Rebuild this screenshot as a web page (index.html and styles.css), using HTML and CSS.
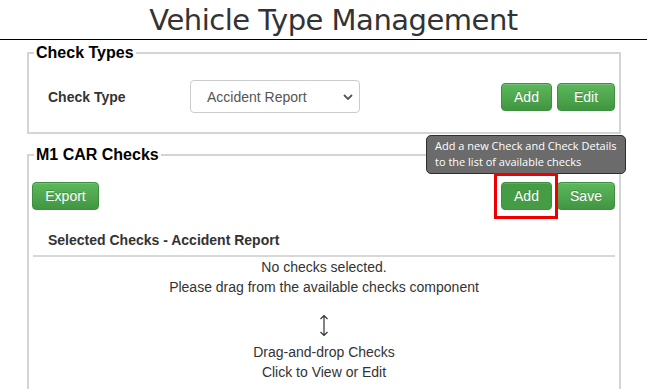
FILE: index.html
```html
<!DOCTYPE html>
<html>
<head>
<meta charset="utf-8">
<link rel="stylesheet" href="styles.css">
</head>
<body>
<h1 class="page-title">Vehicle Type Management</h1>

<fieldset class="panel">
  <legend class="panel-legend">Check Types</legend>
  <div class="type-row">
    <label class="type-label">Check Type</label>
    <select class="type-select">
      <option>Accident Report</option>
    </select>
    <div class="btn-group">
      <button class="btn">Add</button>
      <button class="btn btn-wide">Edit</button>
    </div>
  </div>
</fieldset>

<fieldset class="panel panel-checks">
  <legend class="panel-legend">M1 CAR Checks</legend>
  <div class="toolbar">
    <button class="btn btn-export">Export</button>
    <div class="btn-group">
      <button class="btn btn-active">Add</button>
      <button class="btn btn-wide">Save</button>
    </div>
  </div>
  <div class="tooltip">Add a new Check and Check Details<br>to the list of available checks</div>
  <div class="highlight"></div>
  <div class="section-head">Selected Checks - Accident Report</div>
  <div class="empty">
    <p class="empty-line">No checks selected.</p>
    <p class="empty-line">Please drag from the available checks component</p>
    <svg class="updown" width="12" height="23" viewBox="0 0 12 23">
      <path d="M6 1.5 V21.5 M2.5 5 L6 1.5 L9.5 5 M2.5 18 L6 21.5 L9.5 18" fill="none" stroke="#333" stroke-width="1.2"/>
    </svg>
    <p class="empty-line">Drag-and-drop Checks</p>
    <p class="empty-line">Click to View or Edit</p>
  </div>
</fieldset>
</body>
</html>
```

FILE: styles.css
```css
html, body {
  margin: 0;
  padding: 0;
  background: #fff;
  font-family: "Liberation Sans", Arial, sans-serif;
  color: #333;
}

.page-title {
  margin: 0;
  padding: 2px 0 0 20px;
  height: 37px;
  line-height: 36px;
  font-family: "DejaVu Sans", Verdana, sans-serif;
  font-weight: normal;
  font-size: 29px;
  letter-spacing: -0.5px;
  text-align: center;
  color: #333;
  border-bottom: 1px solid #000;
}

.panel {
  margin: 4px 26px 0 27px;
  padding: 0 3px;
  border: 2px solid #d4d4d4;
  min-width: 0;
}

.panel-checks {
  position: relative;
  margin-top: 12px;
  border-bottom: none;
}

.panel-legend {
  margin-left: 2px;
  padding: 0 2px;
  font-weight: bold;
  font-size: 16px;
  line-height: 18px;
  color: #000;
}

.type-row {
  display: flex;
  align-items: center;
  margin: 18px 1px 19px 0;
}

.type-label {
  width: 142px;
  padding-left: 16px;
  font-weight: bold;
  font-size: 14px;
}

.type-select {
  -webkit-appearance: none;
  appearance: none;
  width: 170px;
  height: 33px;
  padding: 0 0 0 16px;
  border: 1px solid #ccc;
  border-radius: 4px;
  background: #fff url("data:image/svg+xml,%3Csvg xmlns='http://www.w3.org/2000/svg' width='10' height='6' viewBox='0 0 10 6'%3E%3Cpath d='M1 1 L5 5 L9 1' fill='none' stroke='%23555' stroke-width='1.8'/%3E%3C/svg%3E") no-repeat right 6px center;
  font-family: "Liberation Sans", Arial, sans-serif;
  font-size: 14px;
  color: #555;
}

.btn-group {
  display: flex;
  gap: 5px;
  margin-left: auto;
}

.btn {
  height: 28px;
  width: 51px;
  padding: 0;
  border: 1px solid #3e8f3e;
  border-radius: 4px;
  background: linear-gradient(to bottom, #5cb85c 0%, #419641 100%);
  color: #fff;
  font-family: "Liberation Sans", Arial, sans-serif;
  font-size: 14px;
  text-shadow: 0 -1px 0 rgba(0, 0, 0, 0.2);
  box-shadow: inset 0 1px 0 rgba(255, 255, 255, 0.15);
}

.btn-wide { width: 58px; }
.btn-export { width: 67px; }

.btn-active {
  background: #449d44;
  border-color: #3e8f3e;
}

.toolbar {
  display: flex;
  align-items: center;
  margin: 18px 1px 0 0;
}

.tooltip {
  position: absolute;
  left: 397px;
  top: -29px;
  width: 182px;
  padding: 2px 8px 3px 8px;
  background: #6b6b6b;
  border: 1px solid #2e2e2e;
  border-radius: 5px;
  color: #fff;
  font-family: "Open Sans", "DejaVu Sans", sans-serif;
  font-size: 11px;
  line-height: 16px;
  white-space: nowrap;
}

.highlight {
  position: absolute;
  left: 465px;
  top: 9px;
  width: 58px;
  height: 40px;
  border: 3px solid #ee0000;
}

.section-head {
  margin: 20px 1px 0 1px;
  padding: 0 0 5px 15px;
  line-height: 20px;
  font-weight: bold;
  font-size: 14px;
  border-bottom: 2px solid #d8d8d8;
}

.empty {
  display: flex;
  flex-direction: column;
  align-items: center;
  font-size: 14px;
  line-height: 20px;
  padding-bottom: 20px;
}

.empty-line {
  margin: 0;
}

.updown {
  display: block;
  margin: 17px 0 5px 0;
}
```
